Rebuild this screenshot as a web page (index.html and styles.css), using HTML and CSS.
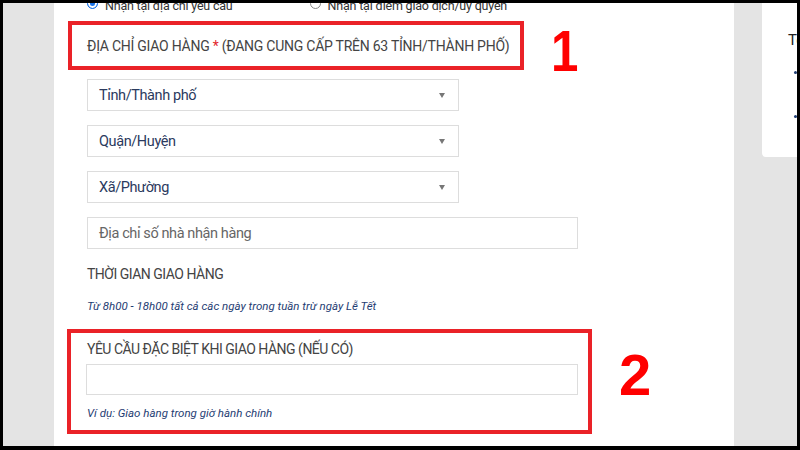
FILE: index.html
```html
<!DOCTYPE html>
<html lang="vi">
<head>
  <meta charset="UTF-8" />
  <title>Địa chỉ giao hàng</title>
  <link rel="stylesheet" href="styles.css">
</head>
<body>

<div class="screen">
  <div class="gutter"></div>

  <!-- Main form panel -->
  <div class="panel">
    <div class="radio-row">
      <label class="radio checked"><span class="dot"></span>Nhận tại địa chỉ yêu cầu</label>
      <label class="radio"><span class="dot"></span>Nhận tại điểm giao dịch/ủy quyền</label>
    </div>

    <div class="mark mark-1">
      <div class="title">ĐỊA CHỈ GIAO HÀNG <span class="req">*</span> (ĐANG CUNG CẤP TRÊN 63 TỈNH/THÀNH PHỐ)</div>
    </div>

    <div class="fields">
      <div class="select">Tỉnh/Thành phố<span class="caret"></span></div>
      <div class="select">Quận/Huyện<span class="caret"></span></div>
      <div class="select">Xã/Phường<span class="caret"></span></div>
      <div class="input placeholder">Địa chỉ số nhà nhận hàng</div>
    </div>

    <div class="title time-title">THỜI GIAN GIAO HÀNG</div>
    <div class="note">Từ 8h00 - 18h00 tất cả các ngày trong tuần trừ ngày Lễ Tết</div>

    <div class="mark mark-2">
      <div class="title">YÊU CẦU ĐẶC BIỆT KHI GIAO HÀNG (NẾU CÓ)</div>
      <div class="input wide"></div>
      <div class="note">Ví dụ: Giao hàng trong giờ hành chính</div>
    </div>

    <div class="num num-1">1</div>
    <div class="num num-2">2</div>
  </div>

  <!-- Order summary (cut off) -->
  <div class="side">
    <div class="side-title">Tổng</div>
    <div class="bullet b1"></div>
    <div class="bullet b2"></div>
  </div>
</div>

</body>
</html>
```

FILE: styles.css
```css
* {
  box-sizing: border-box;
}
body {
  margin: 0;
  background: #000;
  padding: 3px 3px 4px 3px;
  font-family: Roboto, 'Liberation Sans', sans-serif;
}
.screen {
  width: 794px;
  height: 443px;
  background: #e4e4e4;
  display: flex;
  overflow: hidden;
}
.gutter {
  width: 51px;
  flex: none;
}
.panel {
  width: 680px;
  flex: none;
  background: #fff;
  position: relative;
  padding-left: 33px;
}

/* radios */
.radio-row {
  display: flex;
  height: 14px;
  margin-top: -4px;
  font-size: 12.5px;
  line-height: 14px;
  letter-spacing: -0.2px;
  color: #333;
}
.radio {
  display: flex;
  align-items: center;
  gap: 7px;
  white-space: nowrap;
}
.radio + .radio {
  margin-left: 77px;
}
.dot {
  width: 11px;
  height: 11px;
  border-radius: 50%;
  border: 1px solid #888;
  background: #fff;
  margin-top: -6px;
}
.radio.checked .dot {
  border: 1px solid #1a73e8;
  background: #1a73e8;
  box-shadow: inset 0 0 0 2px #fff;
}

/* red annotation boxes */
.mark {
  border: 4px solid #ea2228;
}
.mark-1 {
  margin: 8px 0 0 -19px;
  width: 456px;
  height: 49px;
  padding-left: 15px;
  display: flex;
  align-items: center;
}
.mark-1 .title {
  letter-spacing: -0.25px;
}
.mark-2 {
  margin: 15px 0 0 -20px;
  width: 525px;
  height: 105px;
  padding: 6px 0 0 16px;
}
.num {
  position: absolute;
  font-family: 'Liberation Sans', Arial, sans-serif;
  font-weight: bold;
  font-size: 58px;
  line-height: 60px;
  color: #ff0000;
}
.num-1 {
  left: 497px;
  top: 18px;
  transform: scaleX(0.85);
  transform-origin: left;
}
.num-2 {
  left: 565px;
  top: 342px;
}

.title {
  font-size: 14px;
  line-height: 20px;
  letter-spacing: -0.5px;
  color: #444;
  white-space: nowrap;
}
.req {
  color: #e3262d;
}

/* form fields */
.fields {
  display: flex;
  flex-direction: column;
  gap: 14px;
  margin-top: 9px;
}
.select, .input {
  height: 32px;
  border: 1px solid #ddd;
  display: flex;
  align-items: center;
  padding-left: 11px;
  font-size: 14.5px;
  letter-spacing: -0.4px;
  color: #2b3a5e;
  position: relative;
}
.select {
  width: 372px;
}
.input {
  width: 491px;
}
.placeholder {
  color: #666;
}
.caret {
  position: absolute;
  right: 13px;
  top: 13px;
  border-left: 3.5px solid transparent;
  border-right: 3.5px solid transparent;
  border-top: 5px solid #777;
}
.input.wide {
  margin: 5px 0 0 -1px;
  width: 492px;
  height: 31px;
}

.time-title {
  margin-top: 15px;
}
.note {
  margin-top: 14px;
  font-size: 11.5px;
  line-height: 16px;
  font-style: italic;
  color: #1f3d73;
}
.mark-2 .note {
  margin-top: 10px;
}

/* right side card */
.side {
  width: 35px;
  height: 154px;
  flex: none;
  margin-left: 28px;
  background: #fff;
  border-bottom-left-radius: 4px;
  position: relative;
  overflow: hidden;
}
.side-title {
  position: absolute;
  left: 26px;
  top: 28px;
  font-size: 15px;
  color: #222;
  white-space: nowrap;
}
.bullet {
  position: absolute;
  left: 32px;
  width: 3px;
  height: 3px;
  border-radius: 50%;
  background: #1f3d73;
}
.b1 { top: 68px; }
.b2 { top: 112px; }
```
